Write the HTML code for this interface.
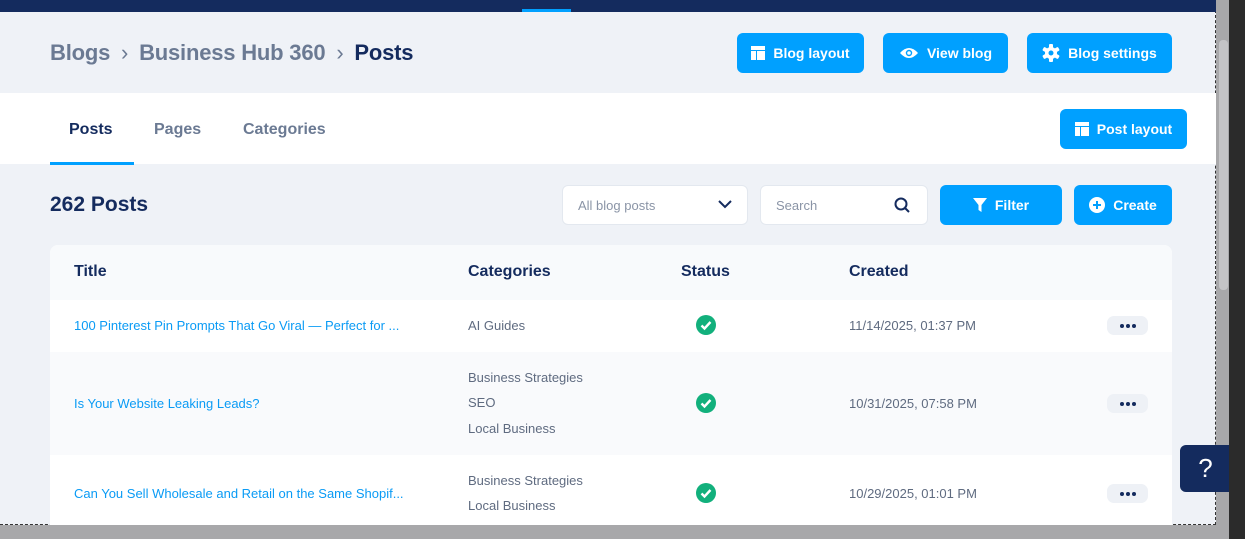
<!DOCTYPE html>
<html><head><style>
*{box-sizing:border-box;margin:0;padding:0}
body{width:1245px;height:539px;overflow:hidden;background:#2b2b2b;font-family:"Liberation Sans",sans-serif;position:relative}
.abs{position:absolute}
.btn{position:absolute;background:#00a0ff;color:#fff;border-radius:6px;font-size:14px;font-weight:bold;display:flex;align-items:center;justify-content:center;gap:8px}
.th{position:absolute;top:263px;font-size:16px;font-weight:bold;color:#142b5e}
.link{position:absolute;left:74px;font-size:13px;color:#0a9bf5}
.cat{position:absolute;left:468px;font-size:13px;color:#5f6b80}
.date{position:absolute;left:849px;font-size:13px;color:#5f6b80}
.dots{position:absolute;left:1107px;width:41px;height:19px;border-radius:7px;background:#eef1f6}
.dots i{position:absolute;top:8px;width:4px;height:4px;border-radius:2px;background:#142b5e}
.chk{position:absolute;left:696px;width:20px;height:20px}
</style></head><body>
<div class="abs" style="left:0;top:0;width:1229px;height:539px;background:#a8a8aa"></div>
<div class="abs" style="left:1219px;top:40px;width:9px;height:250px;background:#c4c4c6;border-radius:4px"></div>
<div class="abs" style="left:0;top:0;width:1216px;height:525px;background:#eff2f7;border-right:1px dashed #333;border-bottom:1px dashed #333"></div>
<div class="abs" style="left:0;top:0;width:1216px;height:12px;background:#142b5e"></div>
<div class="abs" style="left:522px;top:9px;width:49px;height:3px;background:#00a0ff"></div>
<div class="abs" style="left:50px;top:40px;font-size:22px;font-weight:bold;color:#6b7a93;letter-spacing:-0.2px">Blogs <span style="font-weight:normal;margin:0 5px">›</span> Business Hub 360 <span style="font-weight:normal;margin:0 5px">›</span> <span style="color:#142b5e">Posts</span></div>
<div class="btn" style="left:737px;top:33px;width:127px;height:40px"><svg width="14" height="14"><rect width="14" height="4" fill="#fff"/><rect y="5" width="5" height="9" fill="#fff"/><rect x="6" y="5" width="8" height="9" fill="#fff"/></svg>Blog layout</div>
<div class="btn" style="left:883px;top:33px;width:125px;height:40px"><svg width="20" height="14"><path d="M1 7Q10-3 19 7Q10 17 1 7Z" fill="#fff"/><circle cx="10" cy="7" r="3.2" fill="#00a0ff"/><circle cx="10" cy="7" r="1.8" fill="#fff"/></svg>View blog</div>
<div class="btn" style="left:1027px;top:33px;width:145px;height:40px"><svg width="18" height="18" viewBox="0 0 18 18"><g fill="#fff"><circle cx="9" cy="9" r="6"/><rect x="7" y="0" width="4" height="18" rx="1"/><rect x="7" y="0" width="4" height="18" rx="1" transform="rotate(60 9 9)"/><rect x="7" y="0" width="4" height="18" rx="1" transform="rotate(120 9 9)"/></g><circle cx="9" cy="9" r="2.5" fill="#00a0ff"/></svg>Blog settings</div>
<div class="abs" style="left:0;top:93px;width:1216px;height:71px;background:#fff"></div>
<div class="abs" style="left:69px;top:121px;font-size:16px;font-weight:bold;color:#142b5e">Posts</div>
<div class="abs" style="left:154px;top:121px;font-size:16px;font-weight:bold;color:#6b7a93">Pages</div>
<div class="abs" style="left:243px;top:121px;font-size:16px;font-weight:bold;color:#6b7a93">Categories</div>
<div class="abs" style="left:50px;top:162px;width:84px;height:3px;background:#00a0ff"></div>
<div class="btn" style="left:1060px;top:109px;width:127px;height:40px"><svg width="14" height="14"><rect width="14" height="4" fill="#fff"/><rect y="5" width="5" height="9" fill="#fff"/><rect x="6" y="5" width="8" height="9" fill="#fff"/></svg>Post layout</div>
<div class="abs" style="left:50px;top:193px;font-size:21px;font-weight:bold;color:#142b5e">262 Posts</div>
<div class="abs" style="left:562px;top:185px;width:186px;height:40px;background:#fff;border:1px solid #e3e8ef;border-radius:6px"></div>
<div class="abs" style="left:578px;top:198px;font-size:13px;color:#8a94a6">All blog posts</div>
<svg class="abs" style="left:718px;top:199px" width="14" height="10"><path d="M1 2L7 8L13 2" stroke="#142b5e" stroke-width="2" fill="none"/></svg>
<div class="abs" style="left:760px;top:185px;width:168px;height:40px;background:#fff;border:1px solid #e3e8ef;border-radius:6px"></div>
<div class="abs" style="left:776px;top:198px;font-size:13px;color:#8a94a6">Search</div>
<svg class="abs" style="left:894px;top:197px" width="16" height="16"><circle cx="7" cy="7" r="5.5" stroke="#142b5e" stroke-width="2" fill="none"/><path d="M11 11L15 15" stroke="#142b5e" stroke-width="2"/></svg>
<div class="btn" style="left:940px;top:185px;width:122px;height:40px"><svg width="14" height="14"><path d="M0 0H14L8.5 7V14L5.5 12V7Z" fill="#fff"/></svg>Filter</div>
<div class="btn" style="left:1074px;top:185px;width:98px;height:40px"><svg width="16" height="16"><circle cx="8" cy="8" r="8" fill="#fff"/><path d="M8 4V12M4 8H12" stroke="#00a0ff" stroke-width="2"/></svg>Create</div>
<div class="abs" style="left:50px;top:245px;width:1122px;height:280px;background:#fff;border-radius:8px 8px 0 0;overflow:hidden">
<div style="height:55px;background:#f8fafc"></div>
<div style="height:52px;background:#fff"></div>
<div style="height:103px;background:#f9fafc"></div>
</div>
<div class="th" style="left:74px">Title</div>
<div class="th" style="left:468px">Categories</div>
<div class="th" style="left:681px">Status</div>
<div class="th" style="left:849px">Created</div>
<div class="link" style="top:318px">100 Pinterest Pin Prompts That Go Viral — Perfect for ...</div>
<div class="cat" style="top:318px">AI Guides</div>
<div class="date" style="top:318px">11/14/2025, 01:37 PM</div>
<div class="dots" style="top:316px"><i style="left:13px"></i><i style="left:19px"></i><i style="left:25px"></i></div>
<div class="link" style="top:396px">Is Your Website Leaking Leads?</div>
<div class="cat" style="top:370px">Business Strategies</div>
<div class="cat" style="top:395px">SEO</div>
<div class="cat" style="top:421px">Local Business</div>
<div class="date" style="top:396px">10/31/2025, 07:58 PM</div>
<div class="dots" style="top:394px"><i style="left:13px"></i><i style="left:19px"></i><i style="left:25px"></i></div>
<div class="link" style="top:486px">Can You Sell Wholesale and Retail on the Same Shopif...</div>
<div class="cat" style="top:473px">Business Strategies</div>
<div class="cat" style="top:498px">Local Business</div>
<div class="date" style="top:486px">10/29/2025, 01:01 PM</div>
<div class="dots" style="top:484px"><i style="left:13px"></i><i style="left:19px"></i><i style="left:25px"></i></div>
<svg class="chk" style="top:315px" viewBox="0 0 20 20"><circle cx="10" cy="10" r="10" fill="#12b07c"/><path d="M5.5 10.5L8.5 13.5L14.5 7" stroke="#fff" stroke-width="2.4" fill="none"/></svg>
<svg class="chk" style="top:393px" viewBox="0 0 20 20"><circle cx="10" cy="10" r="10" fill="#12b07c"/><path d="M5.5 10.5L8.5 13.5L14.5 7" stroke="#fff" stroke-width="2.4" fill="none"/></svg>
<svg class="chk" style="top:483px" viewBox="0 0 20 20"><circle cx="10" cy="10" r="10" fill="#12b07c"/><path d="M5.5 10.5L8.5 13.5L14.5 7" stroke="#fff" stroke-width="2.4" fill="none"/></svg>
<div class="abs" style="left:1180px;top:445px;width:49px;height:47px;background:#142b5e;border-radius:6px 0 0 6px;color:#fff;font-size:26px;text-align:center;line-height:47px;padding-left:2px">?</div>
<div class="abs" style="left:1229px;top:0;width:16px;height:539px;background:#2b2b2b"></div>
</body></html>
